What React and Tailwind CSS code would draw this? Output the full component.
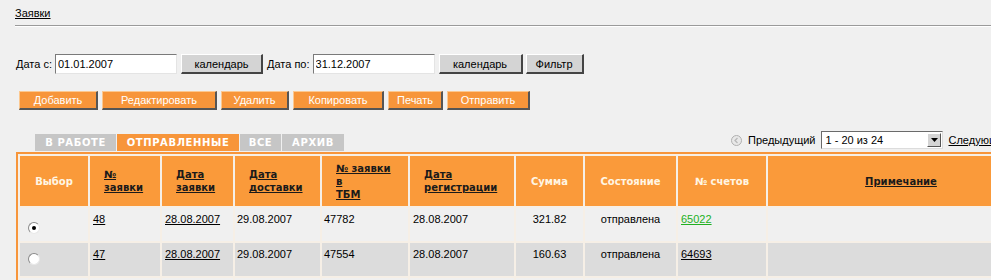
import React from "react";

const orangeBtn =
  "h-[19px] bg-[#f7953a] text-white text-[11px] border-l border-t border-l-[#fcc890] border-t-[#fcc890] border-r-2 border-b-2 border-r-[#555] border-b-[#555] leading-[15px]";
const grayBtn =
  "h-[20px] bg-[#d4d4d4] text-black text-[11px] border-l border-t border-l-white border-t-white border-r-2 border-b-2 border-r-[#444] border-b-[#444] leading-[16px]";
const dateInput =
  "h-[20px] bg-white border border-t-[#7a7a7a] border-l-[#7a7a7a] border-r-[#e4e4e4] border-b-[#e4e4e4] px-[2px] text-[11px] leading-[18px] text-black outline-none";

const gridCols = "grid grid-cols-[68px_70px_71px_85px_86px_104px_67px_91px_88px_266px] gap-[2px]";

const cols = [
  { label: "Выбор", link: false, align: "center" },
  { label: ["№", "заявки"], link: true },
  { label: ["Дата", "заявки"], link: true },
  { label: ["Дата", "доставки"], link: true },
  { label: ["№ заявки", "в", "ТБМ"], link: true },
  { label: ["Дата", "регистрации"], link: true },
  { label: "Сумма", link: false, align: "center" },
  { label: "Состояние", link: false, align: "center" },
  { label: "№ счетов", link: false, align: "center" },
  { label: "Примечание", link: true, align: "center" },
];

const rows = [
  { checked: true, num: "48", date: "28.08.2007", dlv: "29.08.2007", tbm: "47782", reg: "28.08.2007", sum: "321.82", state: "отправлена", bill: "65022", green: true, bg: "bg-[#f0f0f0]" },
  { checked: false, num: "47", date: "28.08.2007", dlv: "29.08.2007", tbm: "47554", reg: "28.08.2007", sum: "160.63", state: "отправлена", bill: "64693", green: false, bg: "bg-[#dcdcdc]" },
];

function Radio({ checked }) {
  return (
    <span className="inline-flex items-center justify-center w-[12px] h-[12px] rounded-full border border-[#8a8a8a] border-b-[#e8e8e8] border-r-[#e8e8e8] bg-white">
      {checked && <span className="w-[4px] h-[4px] rounded-full bg-black" />}
    </span>
  );
}

function HeaderCell({ col }) {
  const text = Array.isArray(col.label) ? col.label : [col.label];
  return (
    <div
      className={`bg-[#fa9a3a] font-bold flex items-center ${col.align === "center" ? "justify-center" : "pl-[14px]"}`}
    >
      {col.link ? (
        <a className="underline text-[#1a1a1a] leading-[13px]">
          {text.map((t, i) => (
            <div key={i}>{t}</div>
          ))}
        </a>
      ) : (
        <span className="text-[#fff6e4]">{text.join(" ")}</span>
      )}
    </div>
  );
}

export default function App() {
  return (
    <div className="w-[991px] h-[280px] overflow-hidden bg-[#f0f0f0] text-[11px] text-black font-['Liberation_Sans',Arial,sans-serif]">
      <div className="w-[1060px]">
        <div className="pl-[15px] pt-[7px] leading-[13px]">
          <a className="underline">Заявки</a>
        </div>
        <div className="ml-[15px] mt-[5px] h-[2px] border-t border-[#9a9a9a] border-b border-b-white" />

        <div className="flex items-center pl-[16px] mt-[27px] h-[20px]">
          <span className="mr-[3px]">Дата с:</span>
          <input className={`${dateInput} w-[122px]`} defaultValue="01.01.2007" />
          <button className={`${grayBtn} w-[82px] ml-[4px]`}>календарь</button>
          <span className="ml-[4px] mr-[3px]">Дата по:</span>
          <input className={`${dateInput} w-[122px]`} defaultValue="31.12.2007" />
          <button className={`${grayBtn} w-[84px] ml-[4px]`}>календарь</button>
          <button className={`${grayBtn} w-[58px] ml-[3px]`}>Фильтр</button>
        </div>

        <div className="flex pl-[19px] mt-[17px] gap-[4px]">
          <button className={`${orangeBtn} w-[79px]`}>Добавить</button>
          <button className={`${orangeBtn} w-[115px]`}>Редактировать</button>
          <button className={`${orangeBtn} w-[68px]`}>Удалить</button>
          <button className={`${orangeBtn} w-[91px]`}>Копировать</button>
          <button className={`${orangeBtn} w-[55px]`}>Печать</button>
          <button className={`${orangeBtn} w-[83px]`}>Отправить</button>
        </div>

        <div className="flex items-end mt-[22px] pl-[35px] h-[19px]">
          <div className="flex gap-[1px] text-[10px] font-bold tracking-[0.6px] text-white font-['DejaVu_Sans',Verdana,sans-serif]">
            <span className="h-[17px] w-[81px] bg-[#c6c6c6] flex items-center justify-center">В РАБОТЕ</span>
            <span className="h-[17px] w-[122px] bg-[#f7953a] flex items-center justify-center">ОТПРАВЛЕННЫЕ</span>
            <span className="h-[17px] w-[41px] bg-[#c6c6c6] flex items-center justify-center">ВСЕ</span>
            <span className="h-[17px] w-[62px] bg-[#c6c6c6] flex items-center justify-center">АРХИВ</span>
          </div>
          <div className="ml-[387px] flex items-center self-start -mt-[1px]">
            <span className="w-[11px] h-[11px] rounded-full border border-[#b0b0b0] bg-[#e8e8e8] flex items-center justify-center mr-[6px]">
              <svg width="7" height="7" viewBox="0 0 7 7">
                <path d="M4.5 1 L2 3.5 L4.5 6" stroke="#b8b8b8" strokeWidth="1.3" fill="none" />
              </svg>
            </span>
            <span>Предыдущий</span>
            <div className="ml-[6px] w-[122px] h-[18px] bg-white border border-t-[#6a6a6a] border-l-[#6a6a6a] border-r-[#dcdcdc] border-b-[#dcdcdc] flex items-center">
              <span className="flex-1 pl-[3px] leading-[16px]">1 - 20 из 24</span>
              <span className="w-[14px] h-[14px] mr-[1px] bg-[#d4d4d4] border border-t-white border-l-white border-r-[#555] border-b-[#555] flex items-center justify-center">
                <svg width="7" height="4" viewBox="0 0 7 4">
                  <path d="M0 0 H7 L3.5 4 Z" fill="#000" />
                </svg>
              </span>
            </div>
            <a className="ml-[5px] underline">Следующий</a>
          </div>
        </div>

        <div className="ml-[16px] mt-[1px] w-[1029px] bg-[#f6efe6] border-l-[2px] border-t-[2px] border-[#f7953a] p-[2px] pr-0 flex flex-col gap-[2px]">
          <div className={`${gridCols} h-[50px] font-['DejaVu_Sans',Verdana,sans-serif] text-[10px]`}>
            {cols.map((c, i) => (
              <HeaderCell key={i} col={c} />
            ))}
          </div>
          {rows.map((r, i) => (
            <div key={i} className={`${gridCols} h-[33px]`}>
              <div className={`${r.bg} pl-[8px] pt-[10px]`}>
                <Radio checked={r.checked} />
              </div>
              <div className={`${r.bg} pl-[3px] pt-[3px]`}>
                <a className="underline">{r.num}</a>
              </div>
              <div className={`${r.bg} pl-[3px] pt-[3px]`}>
                <a className="underline">{r.date}</a>
              </div>
              <div className={`${r.bg} pl-[2px] pt-[3px]`}>{r.dlv}</div>
              <div className={`${r.bg} pl-[2px] pt-[3px]`}>{r.tbm}</div>
              <div className={`${r.bg} pl-[3px] pt-[3px]`}>{r.reg}</div>
              <div className={`${r.bg} text-center pt-[3px]`}>{r.sum}</div>
              <div className={`${r.bg} text-center pt-[3px]`}>{r.state}</div>
              <div className={`${r.bg} pl-[3px] pt-[3px]`}>
                <a className={`underline ${r.green ? "text-[#22b022]" : ""}`}>{r.bill}</a>
              </div>
              <div className={r.bg} />
            </div>
          ))}
          <div className={`${gridCols} h-[33px]`}>
            {cols.map((c, i) => (
              <div key={i} className="bg-[#f0f0f0]" />
            ))}
          </div>
        </div>
      </div>
    </div>
  );
}
